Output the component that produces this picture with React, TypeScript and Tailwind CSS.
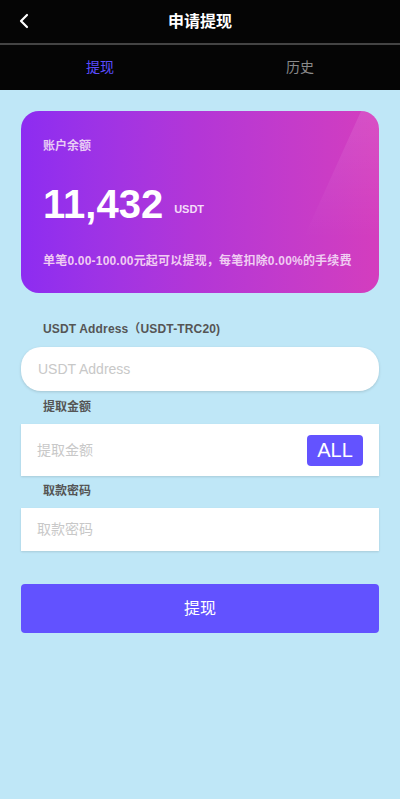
import React from "react";

const font = { fontFamily: '"Liberation Sans", Arial, "Noto Sans CJK SC", sans-serif' };

export default function App() {
  return (
    <div className="min-h-[799px] w-[400px] bg-[#bfe7f7]" style={font}>
      {/* header */}
      <div className="relative flex h-[45px] items-center justify-center border-b-2 border-[#444] bg-[#050505]">
        <button className="absolute left-[16px] top-[11px] text-white">
          <svg width="18" height="20" viewBox="0 0 18 20" fill="none">
            <path d="M11 4 L5 10 L11 16" stroke="white" strokeWidth="2.2" strokeLinecap="round" strokeLinejoin="round" />
          </svg>
        </button>
        <h1 className="text-[16px] font-bold text-white">申请提现</h1>
      </div>
      {/* tabs */}
      <div className="flex h-[45px] items-center bg-[#050505] text-[14px]">
        <div className="flex-1 text-center text-[#5b4dff]">提现</div>
        <div className="flex-1 text-center text-[#8a8a8a]">历史</div>
      </div>

      <div className="px-[21px] pt-[21px]">
        {/* balance card */}
        <div className="relative h-[182px] overflow-hidden rounded-[18px] bg-gradient-to-r from-[#8d2cf1] via-[#b436d6] to-[#d43dbe] px-[22px] pt-[26px]">
          <div className="absolute inset-0 bg-gradient-to-b from-white/10 to-transparent to-70% [clip-path:polygon(95%_0,100%_0,100%_100%,72%_100%)]" />
          <div className="relative text-[12px] font-bold text-[#e8cdf5]">账户余额</div>
          <div className="relative mt-[26px] flex items-end">
            <span className="text-[40px] font-bold leading-[46px] text-white">11,432</span>
            <span className="mb-[10px] ml-[11px] text-[11px] font-bold text-[#f3dcf8]">USDT</span>
          </div>
          <div className="relative mt-[25px] text-[12px] font-bold tracking-[0.2px] text-[#f0ccf2]">
            单笔0.00-100.00元起可以提现，每笔扣除0.00%的手续费
          </div>
        </div>

        {/* form */}
        <div className="mt-[27px] pl-[22px] text-[12px] font-bold tracking-[0.15px] text-[#555]">USDT Address（USDT-TRC20)</div>
        <div className="mt-[9px] flex h-[44px] items-center rounded-[20px] bg-white px-[17px] shadow-[0_1px_3px_rgba(0,0,0,0.15)]">
          <span className="text-[14px] text-[#c8c8c8]">USDT Address</span>
        </div>

        <div className="mt-[7px] pl-[22px] text-[12px] font-bold text-[#555]">提取金额</div>
        <div className="mt-[8px] flex h-[52px] items-center justify-between bg-white pl-[16px] pr-[16px] shadow-[0_1px_2px_rgba(0,0,0,0.12)]">
          <span className="text-[14px] text-[#c8c8c8]">提取金额</span>
          <span className="flex h-[31px] w-[56px] items-center justify-center rounded-[4px] bg-[#6353ff] text-[20px] text-white">ALL</span>
        </div>

        <div className="mt-[6px] pl-[22px] text-[12px] font-bold text-[#555]">取款密码</div>
        <div className="mt-[8px] flex h-[43px] items-center bg-white pl-[16px] shadow-[0_1px_2px_rgba(0,0,0,0.12)]">
          <span className="text-[14px] text-[#c8c8c8]">取款密码</span>
        </div>

        <button className="mt-[33px] flex h-[49px] w-full items-center justify-center rounded-[4px] bg-[#6252ff] text-[16px] text-white">
          提现
        </button>
      </div>
    </div>
  );
}
